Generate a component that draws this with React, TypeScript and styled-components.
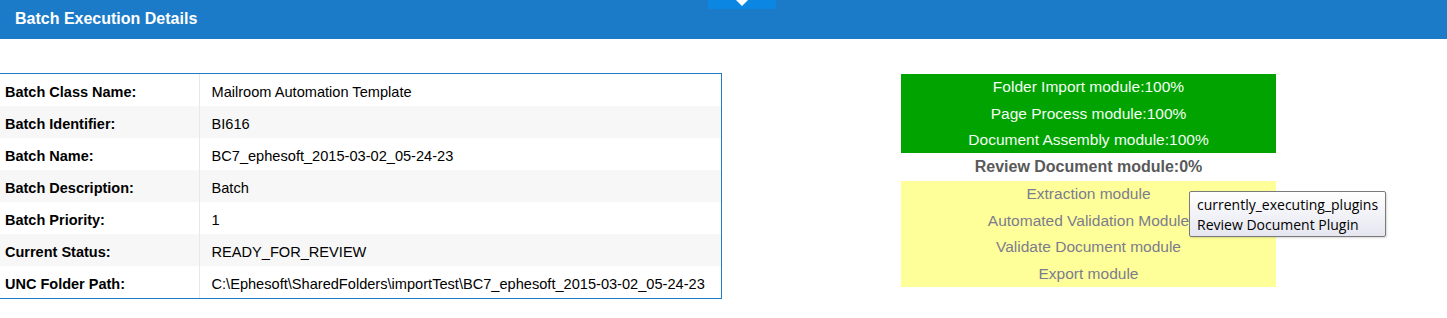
import { createGlobalStyle, styled } from 'styled-components';

const GlobalStyle = createGlobalStyle`
  html, body {
    margin: 0;
    padding: 0;
    background: #ffffff;
    font-family: 'Liberation Sans', Arial, sans-serif;
  }
`;

const Page = styled.div`
  width: 1447px;
  height: 318px;
  overflow: hidden;
  background: #fff;
`;

const HeaderBar = styled.div`
  position: relative;
  height: 39px;
  background: #1b7bc8;
  display: flex;
  align-items: center;
  padding-left: 15px;
  box-sizing: border-box;
`;

const Title = styled.h1`
  margin: 0 0 2px;
  font-size: 16px;
  font-weight: bold;
  color: #ffffff;
`;

// little collapse tab hanging from the top edge
const CollapseTab = styled.div`
  position: absolute;
  top: 0;
  left: 708px;
  width: 68px;
  height: 9px;
  background: #0b86e3;
  display: flex;
  justify-content: center;
`;

const Content = styled.div`
  display: flex;
  align-items: flex-start;
  padding-top: 34px;
`;

const TableFrame = styled.div`
  width: 721px;
  border-top: 1px solid #1b7bc8;
  border-right: 1px solid #1b7bc8;
  border-bottom: 1px solid #1b7bc8;
`;

const DetailTable = styled.table`
  width: 100%;
  border-collapse: collapse;
  border-spacing: 0;
  color: #000;
`;

const Row = styled.tr<{ $alt: boolean }>`
  height: 32px;
  background: ${({ $alt }) => ($alt ? '#f7f7f7' : '#ffffff')};
  & + & td {
    border-top: 1px solid #e6e6e6;
  }
`;

const Label = styled.td`
  width: 199px;
  box-sizing: border-box;
  padding: 3px 0 0 5px;
  font-size: 14.5px;
  font-weight: bold;
  border-right: 1px solid #e8e8e8;
`;

const Value = styled.td`
  padding: 3px 0 0 12px;
  font-size: 14.6px;
`;

const Progress = styled.div`
  position: relative;
  margin-left: 179px;
  margin-top: 1px;
  width: 375px;
  display: flex;
  flex-direction: column;
  text-align: center;
`;

const ModuleGroup = styled.div<{ $tone: 'done' | 'pending' }>`
  background: ${({ $tone }) => ($tone === 'done' ? '#00a300' : '#ffff99')};
  color: ${({ $tone }) => ($tone === 'done' ? '#f4fff4' : '#7c7c8e')};
  font-size: 15.5px;
`;

const ModuleLine = styled.div<{ $h: number }>`
  height: ${({ $h }) => $h}px;
  line-height: ${({ $h }) => $h}px;
`;

const CurrentModule = styled.div`
  height: 28px;
  line-height: 27px;
  font-size: 16px;
  font-weight: bold;
  color: #595959;
`;

const Tooltip = styled.div`
  position: absolute;
  left: 288px;
  top: 117px;
  width: 197px;
  height: 46px;
  box-sizing: border-box;
  padding: 3px 0 0 7px;
  border: 1px solid #7a7a7a;
  border-radius: 2px;
  background: linear-gradient(#ffffff, #e5e6f0);
  box-shadow: 1px 1px 2px rgba(0, 0, 0, 0.15);
  font-family: 'Open Sans', 'Noto Sans', sans-serif;
  font-size: 14px;
  line-height: 20px;
  color: #000;
  text-align: left;
  white-space: nowrap;
`;

const details: [string, string][] = [
  ['Batch Class Name:', 'Mailroom Automation Template'],
  ['Batch Identifier:', 'BI616'],
  ['Batch Name:', 'BC7_ephesoft_2015-03-02_05-24-23'],
  ['Batch Description:', 'Batch'],
  ['Batch Priority:', '1'],
  ['Current Status:', 'READY_FOR_REVIEW'],
  ['UNC Folder Path:', 'C:\\Ephesoft\\SharedFolders\\importTest\\BC7_ephesoft_2015-03-02_05-24-23'],
];

const doneModules = ['Folder Import module:100%', 'Page Process module:100%', 'Document Assembly module:100%'];
const pendingModules = ['Extraction module', 'Automated Validation Module', 'Validate Document module', 'Export module'];

export default function App() {
  return (
    <Page>
      <GlobalStyle />
      <HeaderBar>
        <Title>Batch Execution Details</Title>
        <CollapseTab>
          <svg width="12" height="6" viewBox="0 0 12 6">
            <path d="M0 0 L12 0 L6 6 Z" fill="#ffffff" />
          </svg>
        </CollapseTab>
      </HeaderBar>
      <Content>
        <TableFrame>
          <DetailTable>
            <tbody>
              {details.map(([k, v], i) => (
                <Row key={k} $alt={i % 2 === 1}>
                  <Label>{k}</Label>
                  <Value>{v}</Value>
                </Row>
              ))}
            </tbody>
          </DetailTable>
        </TableFrame>
        <Progress>
          <ModuleGroup $tone="done">
            {doneModules.map((m, i) => (
              <ModuleLine key={m} $h={i === 1 ? 27 : 26}>{m}</ModuleLine>
            ))}
          </ModuleGroup>
          <CurrentModule>Review Document module:0%</CurrentModule>
          <ModuleGroup $tone="pending">
            {pendingModules.map((m, i) => (
              <ModuleLine key={m} $h={i % 2 === 0 ? 26 : 27}>{m}</ModuleLine>
            ))}
          </ModuleGroup>
          <Tooltip>
            currently_executing_plugins
            <br />
            Review Document Plugin
          </Tooltip>
        </Progress>
      </Content>
    </Page>
  );
}
